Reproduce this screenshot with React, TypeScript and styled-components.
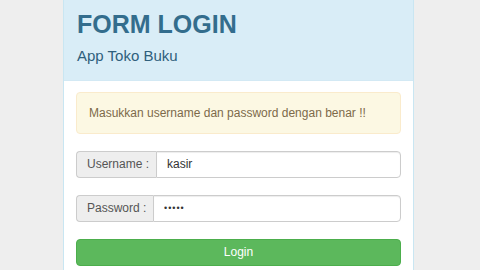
import React from 'react';
import styled, { createGlobalStyle } from 'styled-components';

const GlobalStyle = createGlobalStyle`
  html, body {
    margin: 0;
    padding: 0;
    background: #eeeeee;
    font-family: "Liberation Sans", Arial, sans-serif;
  }
`;

const Page = styled.div`
  width: 480px;
  height: 270px;
  overflow: hidden;
  background: #eeeeee;
`;

const Panel = styled.div`
  width: 351px;
  margin-left: 63px;
  box-sizing: border-box;
  background: #fff;
  border: 1px solid #c9e6f2;
  border-top: none;
  min-height: 300px;
`;

const PanelHeading = styled.div`
  background: #d9edf7;
  border-bottom: 1px solid #d3e9f4;
  padding: 11px 13px 15px;
`;

const Title = styled.h2`
  margin: 0 0 8px;
  font-size: 25px;
  line-height: 1.1;
  font-weight: bold;
  color: #336d8d;
`;

const Subtitle = styled.div`
  font-size: 15px;
  line-height: 18px;
  color: #2f5f7c;
`;

const PanelBody = styled.div`
  padding: 11px 12px 12px;
  display: flex;
  flex-direction: column;
  gap: 17px;
`;

const Alert = styled.div`
  background: #fcf8e3;
  border: 1px solid #faebcc;
  border-radius: 4px;
  color: #7d6a4a;
  font-size: 12px;
  line-height: 16px;
  padding: 12px;
`;

const InputGroup = styled.div`
  display: flex;
  height: 27px;
`;

const Addon = styled.span<{ $width: number }>`
  display: flex;
  align-items: center;
  box-sizing: border-box;
  width: ${(p) => p.$width}px;
  padding: 0 10px;
  background: #eeeeee;
  border: 1px solid #ccc;
  border-right: none;
  border-radius: 4px 0 0 4px;
  color: #555;
  font-size: 12px;
  white-space: nowrap;
`;

const Field = styled.input<{ $secret?: boolean }>`
  flex: 1;
  min-width: 0;
  box-sizing: border-box;
  height: 27px;
  padding: 0 10px;
  border: 1px solid #ccc;
  border-radius: 0 4px 4px 0;
  box-shadow: inset 0 1px 1px rgba(0, 0, 0, 0.075);
  color: #333;
  font-family: "Liberation Sans", Arial, sans-serif;
  font-size: ${(p) => (p.$secret ? '9px' : '12px')};
  letter-spacing: ${(p) => (p.$secret ? '1px' : 'normal')};
  outline: none;
`;

const LoginButton = styled.button`
  height: 27px;
  background: #5cb85c;
  border: 1px solid #4cae4c;
  border-radius: 4px;
  color: #fff;
  font-family: "Liberation Sans", Arial, sans-serif;
  font-size: 12px;
  cursor: pointer;
`;

export default function App() {
  return (
    <Page>
      <GlobalStyle />
      <Panel>
        <PanelHeading>
          <Title>FORM LOGIN</Title>
          <Subtitle>App Toko Buku</Subtitle>
        </PanelHeading>
        <PanelBody>
          <Alert>Masukkan username dan password dengan benar !!</Alert>
          <InputGroup>
            <Addon $width={80}>Username :</Addon>
            <Field type="text" defaultValue="kasir" />
          </InputGroup>
          <InputGroup>
            <Addon $width={77}>Password :</Addon>
            <Field type="password" defaultValue="kasir" $secret />
          </InputGroup>
          <LoginButton>Login</LoginButton>
        </PanelBody>
      </Panel>
    </Page>
  );
}
